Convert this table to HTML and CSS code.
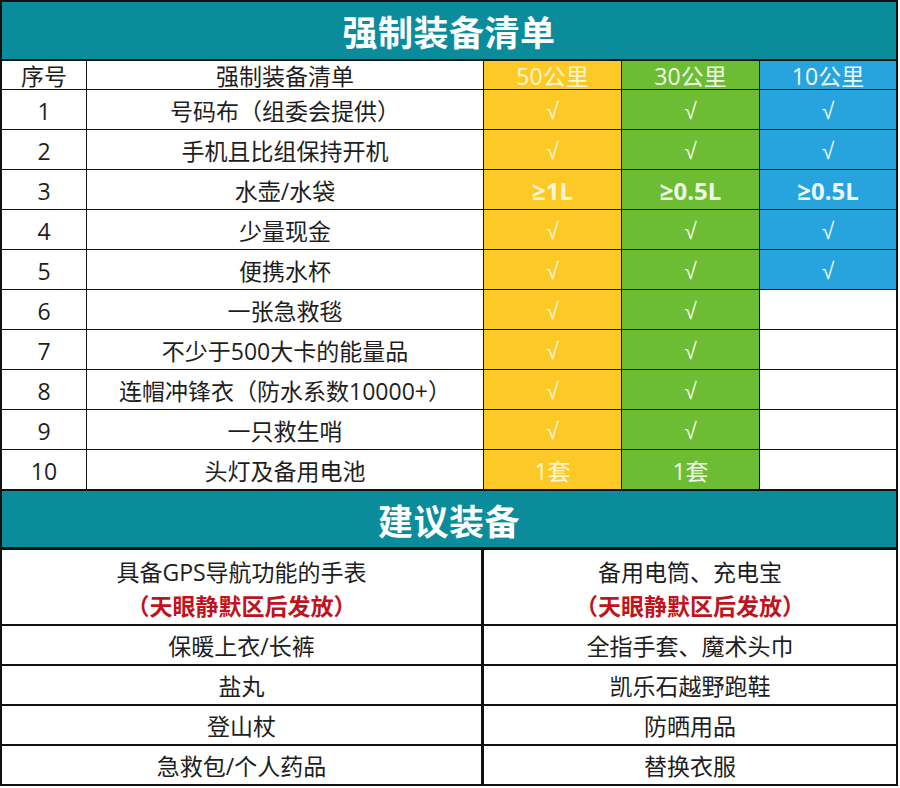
FILE: index.html
```html
<!DOCTYPE html>
<html lang="zh-CN">
<head>
<meta charset="utf-8">
<title>强制装备清单</title>
<link rel="stylesheet" href="styles.css">
</head>
<body>
<div class="sheet">
  <div class="title">强制装备清单</div>
  <div class="grid">
    <div class="c">序号</div><div class="c">强制装备清单</div><div class="c y">50公里</div><div class="c g">30公里</div><div class="c b">10公里</div>
    <div class="c">1</div><div class="c">号码布（组委会提供）</div><div class="c y ck">√</div><div class="c g ck">√</div><div class="c b ck">√</div>
    <div class="c">2</div><div class="c">手机且比组保持开机</div><div class="c y ck">√</div><div class="c g ck">√</div><div class="c b ck">√</div>
    <div class="c">3</div><div class="c">水壶/水袋</div><div class="c y bold">≥1L</div><div class="c g bold">≥0.5L</div><div class="c b bold">≥0.5L</div>
    <div class="c">4</div><div class="c">少量现金</div><div class="c y ck">√</div><div class="c g ck">√</div><div class="c b ck">√</div>
    <div class="c">5</div><div class="c">便携水杯</div><div class="c y ck">√</div><div class="c g ck">√</div><div class="c b ck">√</div>
    <div class="c">6</div><div class="c">一张急救毯</div><div class="c y ck">√</div><div class="c g ck">√</div><div class="c"></div>
    <div class="c">7</div><div class="c">不少于500大卡的能量品</div><div class="c y ck">√</div><div class="c g ck">√</div><div class="c"></div>
    <div class="c">8</div><div class="c">连帽冲锋衣（防水系数10000+）</div><div class="c y ck">√</div><div class="c g ck">√</div><div class="c"></div>
    <div class="c">9</div><div class="c">一只救生哨</div><div class="c y ck">√</div><div class="c g ck">√</div><div class="c"></div>
    <div class="c">10</div><div class="c">头灯及备用电池</div><div class="c y">1套</div><div class="c g">1套</div><div class="c"></div>
  </div>
  <div class="title title2">建议装备</div>
  <div class="grid2">
    <div class="d tall"><span class="ln">具备GPS导航功能的手表</span><span class="ln red">（天眼静默区后发放）</span></div>
    <div class="d tall"><span class="ln">备用电筒、充电宝</span><span class="ln red">（天眼静默区后发放）</span></div>
    <div class="d">保暖上衣/长裤</div><div class="d">全指手套、魔术头巾</div>
    <div class="d">盐丸</div><div class="d">凯乐石越野跑鞋</div>
    <div class="d">登山杖</div><div class="d">防晒用品</div>
    <div class="d">急救包/个人药品</div><div class="d">替换衣服</div>
  </div>
</div>
</body>
</html>
```
FILE: styles.css
```css
html, body {
  margin: 0;
  padding: 0;
  background: #ffffff;
}
body {
  font-family: "Open Sans", "Noto Sans CJK SC", sans-serif;
  color: #1e1e1e;
}
.sheet {
  width: 898px;
  box-sizing: border-box;
  border: 2px solid #111;
}
.title {
  height: 57px;
  background: #0b8c9b;
  color: #ffffff;
  font-family: "Noto Sans CJK SC", sans-serif;
  font-weight: 700;
  font-size: 35px;
  display: flex;
  align-items: center;
  justify-content: center;
  border-bottom: 2px solid #111;
  letter-spacing: 0.5px;
}
.title2 {
  height: 56px;
  border-top: 2px solid #111;
  border-bottom: 3px solid #111;
}
.grid {
  display: grid;
  grid-template-columns: 84px 396px 137px 137px 136px;
  grid-template-rows: 28px repeat(10, 39px);
  gap: 1px;
  background: #111;
}
.c {
  background: #ffffff;
  display: flex;
  align-items: center;
  justify-content: center;
  font-size: 23px;
  line-height: 1;
  white-space: nowrap;
  padding-top: 3px;
}
.y { background: #fdc927; color: #fff6d6; }
.g { background: #6cbd34; color: #f1fae6; }
.b { background: #27a3de; color: #eef8ff; }
.ck {
  font-family: "Liberation Sans", "DejaVu Sans", sans-serif;
  font-size: 23px;
}
.bold {
  font-weight: 700;
  font-family: "Open Sans", "DejaVu Sans", sans-serif;
  font-size: 24px;
}
.grid2 {
  display: grid;
  grid-template-columns: 479px 412px;
  grid-template-rows: 74px repeat(4, 38px);
  gap: 2px 3px;
  background: #111;
}
.d {
  background: #ffffff;
  display: flex;
  flex-direction: column;
  align-items: center;
  justify-content: center;
  font-size: 23px;
  line-height: 1.2;
  white-space: nowrap;
  padding-top: 3px;
  box-sizing: border-box;
}
.ln {
  display: block;
  line-height: 33px;
}
.red {
  color: #c0141c;
  font-weight: 700;
  font-family: "Noto Sans CJK SC", sans-serif;
}
```
